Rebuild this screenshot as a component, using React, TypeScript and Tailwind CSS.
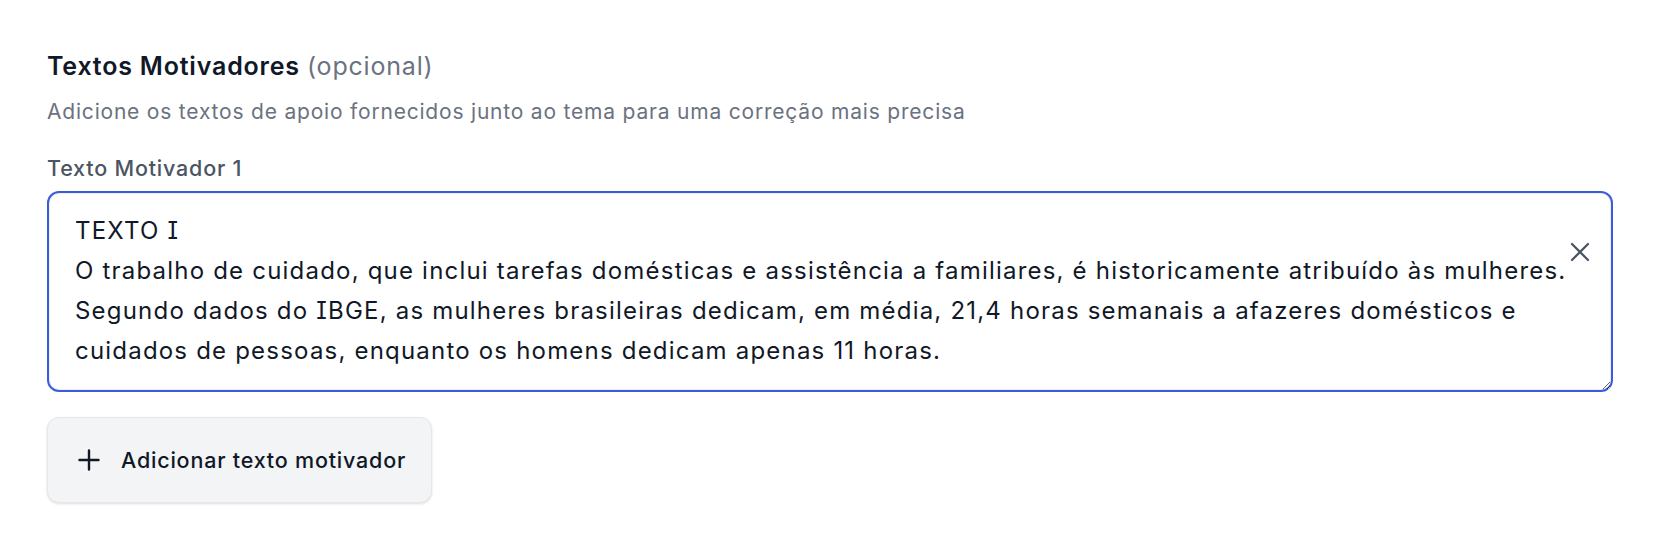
import React from "react";

const FONT = {
  fontFamily: 'Inter, "Noto Sans", sans-serif',
  letterSpacing: "0.05em",
  fontFeatureSettings: '"cv08"',
};

const TEXT =
  "TEXTO I\nO trabalho de cuidado, que inclui tarefas domésticas e assistência a familiares, é historicamente atribuído às mulheres.\nSegundo dados do IBGE, as mulheres brasileiras dedicam, em média, 21,4 horas semanais a afazeres domésticos e\ncuidados de pessoas, enquanto os homens dedicam apenas 11 horas.";

export default function App() {
  return (
    <div className="min-h-[552px] w-full bg-white px-[47px] pt-[48px]" style={FONT}>
      <h2 className="text-[25px] leading-[36px] font-semibold text-[#111827]">
        Textos Motivadores{" "}
        <span className="font-normal text-[#6b7280]">(opcional)</span>
      </h2>
      <p className="mt-[13px] text-[21px] leading-[30px] text-[#6b7280]">
        Adicione os textos de apoio fornecidos junto ao tema para uma correção mais precisa
      </p>
      <div className="mt-[26px]">
        <label className="block text-[21.5px] leading-[30px] font-medium text-[#4b5563]">
          Texto Motivador 1
        </label>
        <div className="relative mt-[8px]">
          <textarea
            defaultValue={TEXT}
            className="block h-[201px] w-full rounded-[12px] border-2 border-[#3b5bdb] bg-white pl-[26px] pr-[40px] pt-[18px] pb-[16px] text-[24px] leading-[40px] text-[#111827] outline-none shadow-[inset_0_0_0_1px_#eceef2] whitespace-pre overflow-hidden"
            style={FONT}
          />
          <button
            type="button"
            className="absolute right-[22px] top-[50px] flex h-[22px] w-[22px] items-center justify-center text-[#4b5563]"
            aria-label="Remover"
          >
            <svg width="20" height="20" viewBox="0 0 20 20" fill="none" stroke="currentColor" strokeWidth="2.3" strokeLinecap="round">
              <path d="M2 2L18 18M18 2L2 18" />
            </svg>
          </button>
        </div>
      </div>
      <button
        type="button"
        className="mt-[25px] flex h-[86px] items-center gap-[21px] rounded-[12px] border-[1.5px] border-[#e5e7eb] bg-[#f3f4f6] pl-[30px] pr-[25px] shadow-sm"
        style={FONT}
      >
        <svg width="22" height="22" viewBox="0 0 22 22" fill="none" stroke="#111827" strokeWidth="2.4" strokeLinecap="round">
          <path d="M11 1.5V20.5M1.5 11H20.5" />
        </svg>
        <span className="text-[21.5px] leading-[30px] font-medium text-[#111827]">
          Adicionar texto motivador
        </span>
      </button>
    </div>
  );
}
